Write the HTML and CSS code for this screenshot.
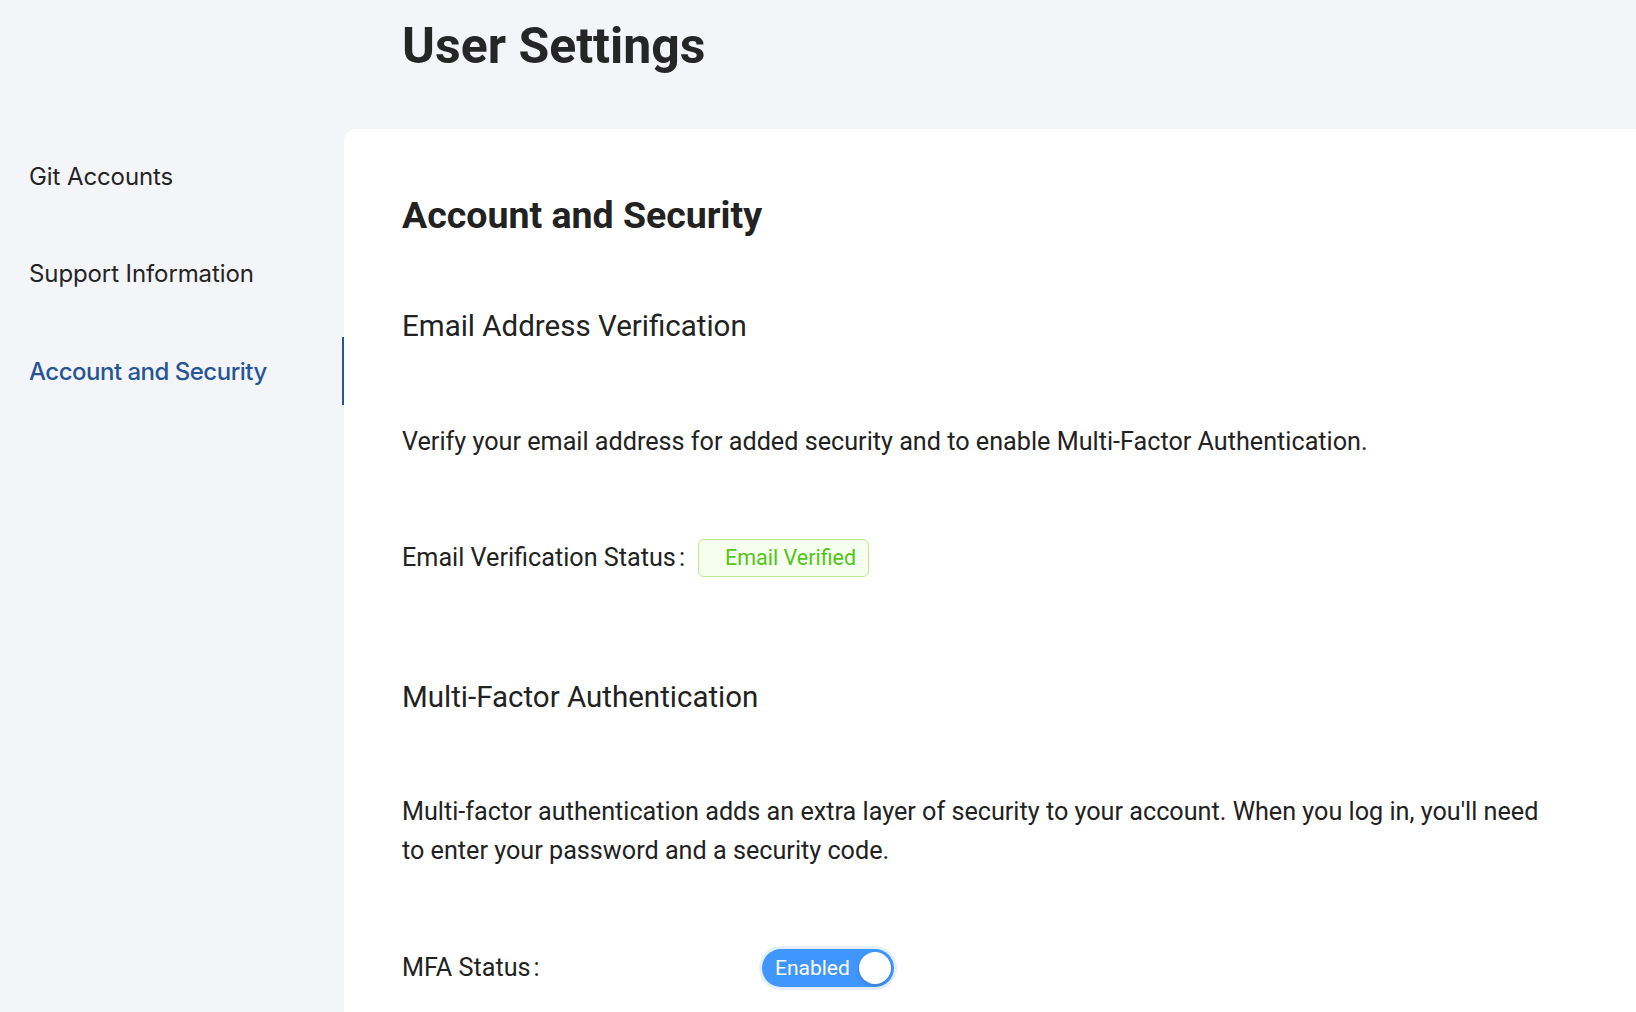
FILE: index.html
```html
<!DOCTYPE html>
<html lang="en">
  <head>
    <meta charset="UTF-8" />
    <meta name="viewport" content="width=device-width, initial-scale=1.0" />
    <title>User Settings</title>
    <link rel="stylesheet" href="styles.css">
  </head>
  <body>
    <div class="header">
      <h1>User Settings</h1>
    </div>

    <div class="layout">
      <div class="sidebar">
        <a href="#" class="menu-item">Git Accounts</a>
        <a href="#" class="menu-item">Support Information</a>
        <a href="#" class="menu-item active">Account and Security</a>
      </div>

      <div class="card">
        <h2>Account and Security</h2>

        <h3 class="section-title">Email Address Verification</h3>
        <p class="section-text">
          Verify your email address for added security and to enable Multi-Factor Authentication.
        </p>
        <div class="field-row email-row">
          <span class="field-label">Email Verification Status</span>
          <span class="tag-success">Email Verified</span>
        </div>

        <h3 class="section-title mfa-title">Multi-Factor Authentication</h3>
        <p class="section-text mfa-text">
          Multi-factor authentication adds an extra layer of security to your account. When you log in, you'll need to enter your password and a security code.
        </p>
        <div class="field-row mfa-row">
          <span class="field-label">MFA Status</span>
          <button class="switch checked" type="button">
            <span class="switch-text">Enabled</span>
            <span class="switch-handle"></span>
          </button>
        </div>
      </div>
    </div>
  </body>
</html>
```

FILE: styles.css
```css
* {
  margin: 0;
  padding: 0;
  box-sizing: border-box;
}

body {
  font-family: Roboto, "Liberation Sans", Arial, sans-serif;
  background: #f4f5f9;
  color: #222;
  min-height: 100vh;
  overflow: hidden;
}

.header {
  padding: 16px 0 0 402px;
  height: 129px;
}

.header h1 {
  font-size: 50px;
  line-height: 60px;
  font-weight: 700;
  color: #262626;
}

.layout {
  display: flex;
  min-height: calc(100vh - 129px);
}

.sidebar {
  width: 344px;
  flex-shrink: 0;
  padding-top: 13px;
  display: flex;
  flex-direction: column;
  gap: 29.5px;
}

.menu-item {
  display: flex;
  align-items: center;
  height: 68px;
  padding-left: 29px;
  font-family: Inter, "Noto Sans", sans-serif;
  font-size: 24px;
  letter-spacing: -0.1px;
  color: #242424;
  text-decoration: none;
}

.menu-item.active {
  color: #275596;
  font-weight: 500;
  letter-spacing: -0.5px;
  border-right: 2px solid #275596;
}

.card {
  flex: 1;
  background: #fff;
  border-top-left-radius: 12px;
  padding: 61px 56px 0 58px;
}

.card h2 {
  font-size: 37.5px;
  line-height: 50px;
  font-weight: 700;
  color: #222;
}

.section-title {
  font-size: 29.5px;
  line-height: 40px;
  font-weight: 400;
  color: #222;
  margin-top: 66px;
}

.mfa-title {
  margin-top: 100px;
}

.section-text {
  font-size: 25.2px;
  line-height: 39.5px;
  margin-top: 76px;
  max-width: 1150px;
}

.mfa-text {
  margin-top: 75px;
}

.field-row {
  display: flex;
  align-items: center;
  height: 38px;
  font-size: 25.2px;
  line-height: 38px;
}

.email-row {
  margin-top: 77px;
}

.mfa-row {
  margin-top: 78px;
}

.field-label::after {
  content: ":";
  margin: 0 13px 0 3px;
}

.mfa-row .field-label {
  width: 360px;
}

.tag-success {
  display: inline-block;
  height: 38px;
  line-height: 36px;
  padding: 0 12px 0 26px;
  font-size: 21.5px;
  color: #52c41a;
  background: #f6ffed;
  border: 1px solid #b7eb8f;
  border-radius: 6px;
}

.switch {
  display: inline-flex;
  align-items: center;
  height: 38px;
  width: 132px;
  padding: 0 3px 0 13px;
  border: none;
  border-radius: 19px;
  background: #4096ff;
  box-shadow: 0 0 0 3px rgba(64, 150, 255, 0.15);
  font-family: Roboto, "Liberation Sans", Arial, sans-serif;
  cursor: pointer;
}

.switch-text {
  flex: 1;
  text-align: left;
  font-size: 21px;
  color: #fff;
}

.switch-handle {
  width: 32px;
  height: 32px;
  border-radius: 50%;
  background: #fff;
  box-shadow: 0 2px 4px rgba(0, 35, 11, 0.2);
}
```
